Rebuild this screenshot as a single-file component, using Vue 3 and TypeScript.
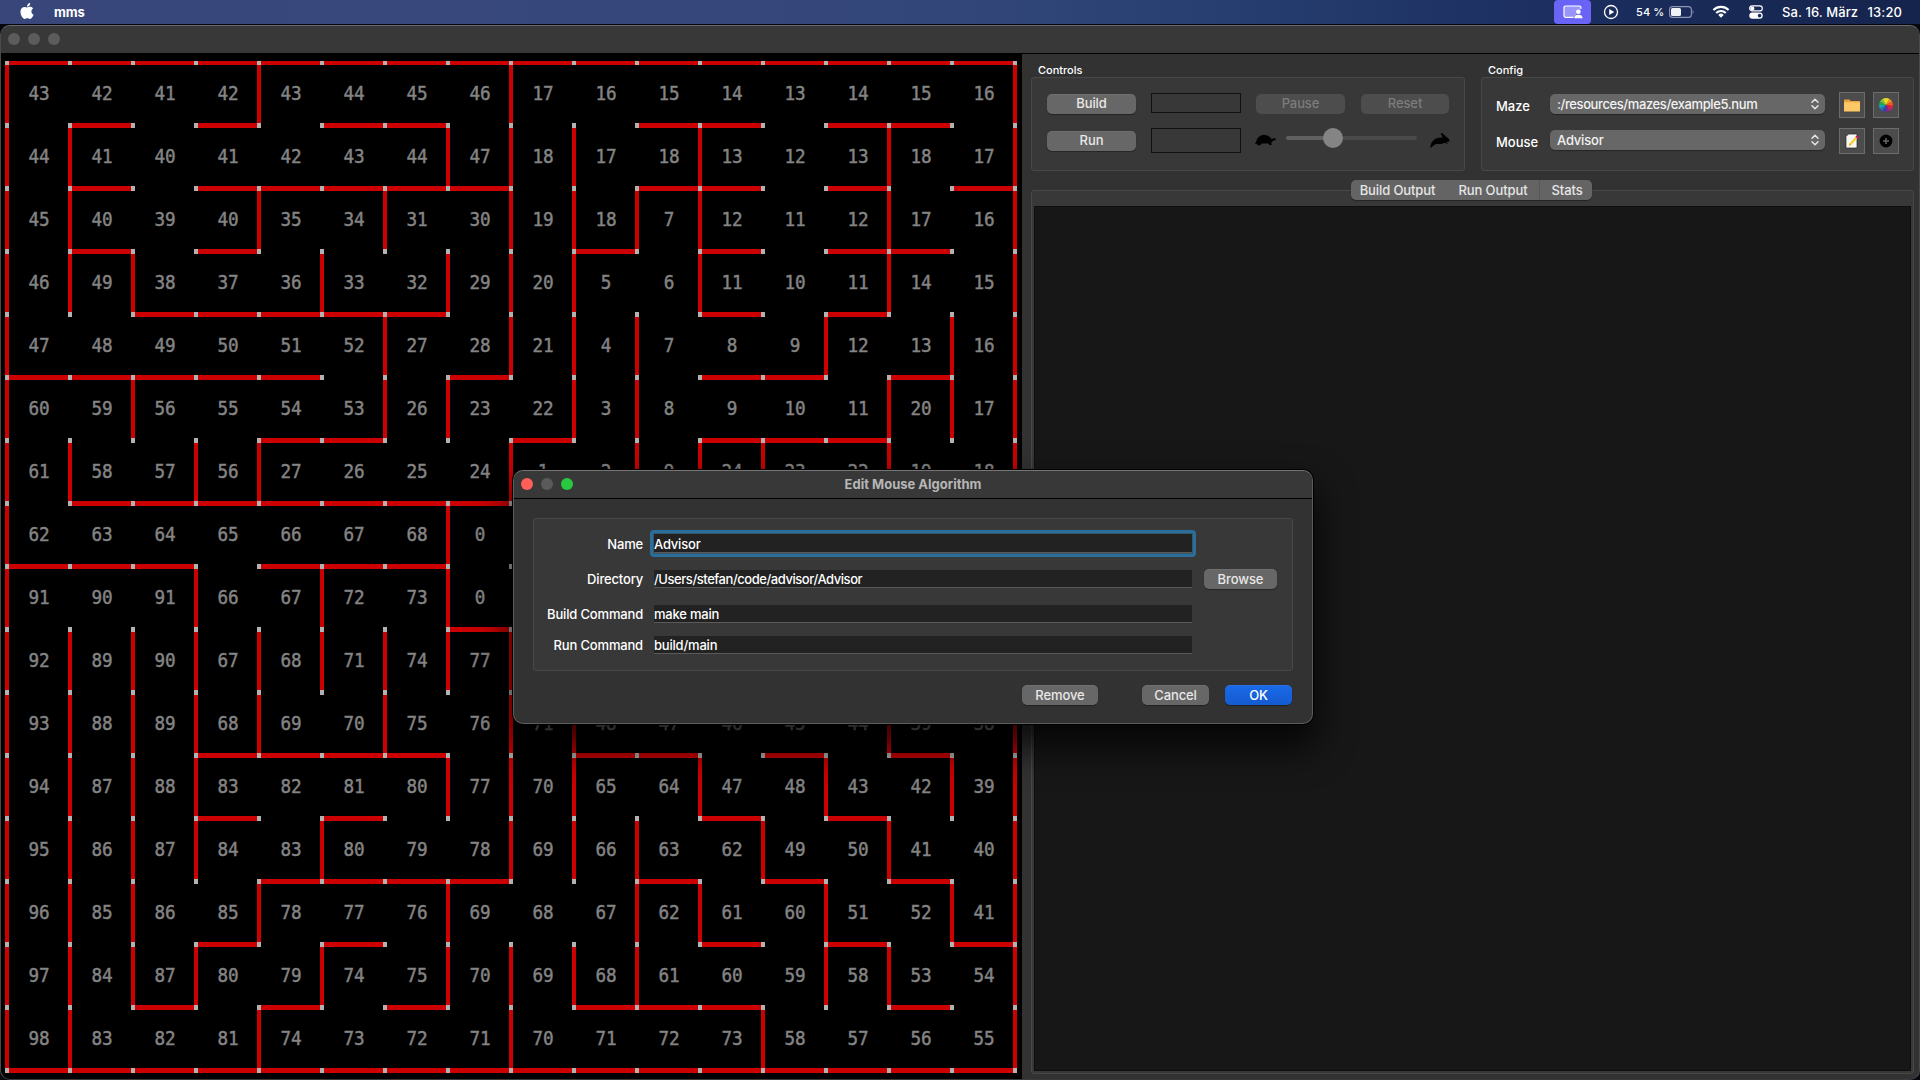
<script setup lang="ts">
interface Rect { x: number; y: number; w: number; h: number }
interface Label { x: number; y: number; t: string }

const PITCH = 63

/* columns that carry a wall on each horizontal grid line */
const horizontal: number[][] = [
  [0, 1, 2, 3, 4, 5, 6, 7, 8, 9, 10, 11, 12, 13, 14, 15],
  [1, 3, 5, 6, 10, 11, 13, 14],
  [1, 3, 4, 5, 6, 7, 10, 11, 13, 15],
  [1, 3, 9, 11, 13, 14],
  [2, 3, 4, 5, 6, 11, 13],
  [0, 1, 2, 3, 4, 7, 11, 12, 14],
  [4, 5, 8, 11, 12, 13],
  [1, 2, 3, 4, 5, 6, 7],
  [0, 1, 2, 4, 5, 6],
  [7],
  [],
  [3, 4, 5, 6, 9, 10, 12, 14],
  [3, 5, 11, 13],
  [4, 5, 6, 7, 10, 12, 14],
  [3, 5, 11, 13, 15],
  [2, 4, 6, 9, 10, 11, 14],
  [0, 1, 2, 3, 4, 5, 6, 7, 8, 9, 10, 11, 12, 13, 14, 15],
]

/* vertical grid lines that carry a wall in each row */
const vertical: number[][] = [
  [0, 4, 8, 16],
  [0, 1, 7, 8, 9, 11, 14, 16],
  [0, 1, 4, 6, 8, 9, 10, 11, 14, 16],
  [0, 1, 2, 5, 7, 8, 9, 11, 14, 16],
  [0, 6, 8, 9, 10, 13, 15, 16],
  [0, 2, 6, 7, 9, 10, 14, 15, 16],
  [0, 1, 3, 4, 8, 10, 11, 12, 14, 16],
  [0, 7, 16],
  [0, 3, 5, 7, 16],
  [0, 1, 2, 3, 4, 5, 6, 7, 8, 16],
  [0, 1, 2, 3, 4, 6, 8, 9, 14, 16],
  [0, 1, 2, 3, 7, 8, 9, 11, 13, 15, 16],
  [0, 1, 2, 3, 5, 8, 9, 10, 12, 14, 16],
  [0, 1, 2, 4, 7, 10, 11, 13, 15, 16],
  [0, 1, 2, 3, 5, 7, 8, 9, 10, 13, 14, 16],
  [0, 1, 4, 8, 12, 16],
]

const distances: string[] = [
  '43 42 41 42 43 44 45 46 17 16 15 14 13 14 15 16',
  '44 41 40 41 42 43 44 47 18 17 18 13 12 13 18 17',
  '45 40 39 40 35 34 31 30 19 18 7 12 11 12 17 16',
  '46 49 38 37 36 33 32 29 20 5 6 11 10 11 14 15',
  '47 48 49 50 51 52 27 28 21 4 7 8 9 12 13 16',
  '60 59 56 55 54 53 26 23 22 3 8 9 10 11 20 17',
  '61 58 57 56 27 26 25 24 1 2 9 24 23 22 19 18',
  '62 63 64 65 66 67 68 0',
  '91 90 91 66 67 72 73 0',
  '92 89 90 67 68 71 74 77',
  '93 88 89 68 69 70 75 76 71 48 47 46 45 44 39 38',
  '94 87 88 83 82 81 80 77 70 65 64 47 48 43 42 39',
  '95 86 87 84 83 80 79 78 69 66 63 62 49 50 41 40',
  '96 85 86 85 78 77 76 69 68 67 62 61 60 51 52 41',
  '97 84 87 80 79 74 75 70 69 68 61 60 59 58 53 54',
  '98 83 82 81 74 73 72 71 70 71 72 73 58 57 56 55',
]

const lineY = (k: number) => (k === 0 ? 7 : 6 + k * PITCH)
const lineH = (k: number) => (k === 0 ? 4 : 5)
const lineX = (i: number) => 4 + i * PITCH

const walls: Rect[] = [
  ...horizontal.flatMap((cols, k) => cols.map((c) => ({ x: lineX(c), y: lineY(k), w: PITCH + 4, h: lineH(k) }))),
  ...vertical.flatMap((lines, r) => lines.map((i) => ({ x: lineX(i), y: lineY(r), w: 4, h: PITCH + 4 }))),
]

const posts: Rect[] = []
for (let k = 0; k <= 16; k++)
  for (let i = 0; i <= 16; i++) posts.push({ x: lineX(i), y: lineY(k), w: 4, h: lineH(k) })

const labels: Label[] = distances.flatMap((row, r) =>
  row.split(' ').map((t, c) => ({ x: 38 + c * PITCH, y: 46 + r * PITCH, t })),
)

const wheel = ['#f9d423', '#f7941d', '#f15a29', '#e8252c', '#c2226e', '#7b2a8b', '#3b3fa0', '#1c75bc', '#16a3b8', '#1fa750', '#7ac143', '#d7df23']
const slice = (n: number) => {
  const a = ((n * 30 - 90) * Math.PI) / 180
  const b = (((n + 1) * 30 - 90) * Math.PI) / 180
  const p = (v: number) => (7 + 7 * v).toFixed(2)
  return `M7 7L${p(Math.cos(a))} ${p(Math.sin(a))}A7 7 0 0 1 ${p(Math.cos(b))} ${p(Math.sin(b))}Z`
}
</script>

<template>
  <div class="screen">
    <header class="menubar">
      <svg class="apple" viewBox="0 0 24 24" width="16" height="16"><path fill="#fff" d="M12.152 6.896c-.948 0-2.415-1.078-3.96-1.04-2.04.027-3.91 1.183-4.961 3.014-2.117 3.675-.546 9.103 1.519 12.09 1.013 1.454 2.208 3.09 3.792 3.039 1.52-.065 2.09-.987 3.935-.987 1.831 0 2.35.987 3.96.948 1.637-.026 2.676-1.48 3.676-2.948 1.156-1.688 1.636-3.325 1.662-3.415-.039-.013-3.182-1.221-3.22-4.857-.026-3.04 2.48-4.494 2.597-4.559-1.429-2.09-3.623-2.324-4.39-2.376-2-.156-3.675 1.09-4.61 1.09zM15.53 3.83c.843-1.012 1.4-2.427 1.245-3.83-1.207.052-2.662.805-3.532 1.818-.78.896-1.454 2.338-1.273 3.714 1.338.104 2.715-.688 3.559-1.701" /></svg>
      <span class="app-name">mms</span>
      <div class="tray">
        <span class="share">
          <svg viewBox="0 0 20 14" width="20" height="14">
            <path d="M10.500 12.400H2.600A1.600 1.600 0 0 1 1 10.800V2.600A1.600 1.600 0 0 1 2.600 1h13.800A1.600 1.600 0 0 1 18 2.600V3.800" fill="#9a95f8" stroke="#fff" stroke-width="1.200" />
            <circle cx="15.400" cy="6.700" r="2.300" fill="#fff" />
            <path d="M11.200 13.200c0-2.400 1.700-3.500 4.200-3.500s4.200 1.100 4.200 3.500z" fill="#fff" />
          </svg>
        </span>
        <svg class="play" viewBox="0 0 16 16" width="16" height="16"><circle cx="8" cy="8" r="6.500" fill="none" stroke="#fff" stroke-width="1.300" /><path d="M6.200 4.900v6.200L11.200 8z" fill="#fff" /></svg>
        <span class="percent">54 %</span>
        <svg class="battery" viewBox="0 0 26 12" width="26" height="12"><rect x=".6" y=".6" width="21.800" height="10.800" rx="3" fill="none" stroke="#8d96b2" stroke-width="1.100" /><rect x="2" y="2" width="10" height="8" rx="1.500" fill="#f2f3f6" /><path d="M23.600 4v4c1.200-.5 1.200-3.500 0-4z" fill="#8d96b2" /></svg>
        <svg class="wifi" viewBox="0 0 18 13" width="18" height="13"><g fill="none" stroke="#fff" stroke-width="2.100"><path d="M1.400 5a10.800 10.800 0 0 1 15.200 0" /><path d="M4.200 8a6.800 6.800 0 0 1 9.600 0" /></g><path d="M9 12.700L6.300 9.900a3.900 3.900 0 0 1 5.400 0z" fill="#fff" /></svg>
        <svg class="center" viewBox="0 0 14 14" width="14" height="14"><rect x=".7" y=".9" width="12.600" height="5" rx="2.500" fill="none" stroke="#fff" stroke-width="1.200" /><circle cx="3.400" cy="3.400" r="2" fill="#fff" /><rect x=".3" y="7.600" width="13.400" height="6.100" rx="3" fill="#fff" /><circle cx="10.600" cy="10.650" r="1.800" fill="#1c2b5c" /></svg>
        <span class="clock"><span>Sa. 16. März</span><span>13:20</span></span>
      </div>
    </header>

    <main class="window">
      <div class="titlebar"><i /><i /><i /></div>
      <div class="body">
        <section class="maze">
          <svg width="1021" height="1025" viewBox="0 0 1021 1025" shape-rendering="crispEdges">
            <rect v-for="(w, n) in walls" :key="'w' + n" :x="w.x" :y="w.y" :width="w.w" :height="w.h" fill="#cc0000" />
            <rect v-for="(p, n) in posts" :key="'p' + n" :x="p.x" :y="p.y" :width="p.w" :height="p.h" fill="#b2b2b2" />
            <text v-for="(l, n) in labels" :key="'l' + n" :transform="`translate(${l.x} ${l.y}) scale(.93 1)`" class="dist">{{ l.t }}</text>
          </svg>
        </section>

        <section class="side">
          <div class="groups">
            <div class="group controls">
              <h3>Controls</h3>
              <div class="box">
                <div class="ctl-row first">
                  <button class="btn">Build</button>
                  <span class="status" />
                  <button class="btn off">Pause</button>
                  <button class="btn off last">Reset</button>
                </div>
                <div class="ctl-row second">
                  <button class="btn">Run</button>
                  <span class="status tall" />
                  <svg class="turtle" viewBox="0 0 21 12" width="21" height="12"><path d="M0 10C.2 9 1 8.400 1.300 7.600 2 3.500 5 1 8.800 1c4 0 6.600 1.700 7.800 4.200 1-.9 2.300-1.300 3.500-.9.900.4.900 1.500 0 1.900-1 .4-1.900.3-2.400.9-.5.700-.6 1.300-1.700 1.500.4.800.8 1.700.7 2.500h-2.200L13.300 9.600H6.600l-1 1.500c-1.200.3-2.600.3-3.600 0 .1-.5.300-.9.500-1.300z" fill="#000" /></svg>
                  <span class="slider"><i /></span>
                  <svg class="hare" viewBox="0 0 20 17" width="20" height="17"><path d="M.8 16.300C0 13.500 1 10.400 3.500 8.200 5.800 6 9 5.200 12.600 5.600L11 1.900C10.800.8 11.800.6 12.500 1.300L16.400 5l1.900 1.300c.9.800 1.100 1.900 1.300 2.900-1.100.6-2.300.6-3.500.8.600.7 1.900.7 2.300 1.300-1.200.6-2.800.2-4.300-.5-1.200 1.100-3.900 1.500-6.900 1C4.600 12 3.100 13.900.8 16.300z" fill="#000" /></svg>
                </div>
              </div>
            </div>
            <div class="group config">
              <h3>Config</h3>
              <div class="box">
                <div class="cfg-row">
                  <label>Maze</label>
                  <span class="select"><b class="path">:/resources/mazes/example5.num</b><svg viewBox="0 0 8 12" width="8" height="12"><path d="M1 4.300L4 1.200l3 3.100M1 7.700l3 3.100 3-3.100" fill="none" stroke="#e4e4e4" stroke-width="1.500" stroke-linecap="round" stroke-linejoin="round" /></svg></span>
                  <span class="tool"><svg viewBox="0 0 16 13" width="16" height="13"><path d="M0 1.200Q0 .5.700.5h4.600l1.400 1.500H15.300q.7 0 .7.700V6H0z" fill="#e8a33d" /><rect y="3.300" width="16" height="9.200" rx=".6" fill="#ffc866" /></svg></span>
                  <span class="tool"><svg viewBox="0 0 14 14" width="14" height="14"><path v-for="(c, n) in wheel" :key="c" :d="slice(n)" :fill="c" /></svg></span>
                </div>
                <div class="cfg-row">
                  <label>Mouse</label>
                  <span class="select"><b>Advisor</b><svg viewBox="0 0 8 12" width="8" height="12"><path d="M1 4.300L4 1.200l3 3.100M1 7.700l3 3.100 3-3.100" fill="none" stroke="#e4e4e4" stroke-width="1.500" stroke-linecap="round" stroke-linejoin="round" /></svg></span>
                  <span class="tool"><svg viewBox="0 0 14 16" width="14" height="16"><path d="M1 3.500L3.500 1H12v14H1z" fill="#f7f7f2" stroke="#222" stroke-width=".7" /><path d="M3.800 12.800l.9-2.600 5.800-6.400 1.800 1.500-5.900 6.500z" fill="#f6d32d" /><path d="M10.300 4l1.100-1.200q.6-.4 1.100 0l.7.600q.5.500.1 1.100l-1.100 1.100z" fill="#d6147c" /><path d="M3.800 12.800l.9-2.600 1.700 1.600z" fill="#e8a33d" /></svg></span>
                  <span class="tool"><svg viewBox="0 0 14 14" width="14" height="14"><circle cx="7" cy="7" r="6.400" fill="#000" /><path d="M7 4v6M4 7h6" stroke="#666" stroke-width="1.500" /></svg></span>
                </div>
              </div>
            </div>
          </div>

          <div class="tabs"><span class="t1">Build Output</span><span class="t2">Run Output</span><span class="t3">Stats</span></div>
          <div class="pane"><div class="output" /></div>
        </section>
      </div>
    </main>

    <div class="dialog">
      <div class="dlg-title"><div class="lights"><i class="red" /><i /><i class="green" /></div><strong>Edit Mouse Algorithm</strong></div>
      <div class="form">
        <div class="line name"><label>Name</label><span class="ring"><span class="field">Advisor</span></span></div>
        <div class="line dir"><label>Directory</label><span class="field path">/Users/stefan/code/advisor/Advisor</span><button class="btn browse">Browse</button></div>
        <div class="line cmd"><label>Build Command</label><span class="field">make main</span></div>
        <div class="line run"><label>Run Command</label><span class="field">build/main</span></div>
      </div>
      <div class="actions">
        <button class="btn remove">Remove</button>
        <button class="btn cancel">Cancel</button>
        <button class="btn ok">OK</button>
      </div>
    </div>
  </div>
</template>

<style>
body { margin: 0; background: #000; overflow: hidden; }
</style>

<style scoped>
* { box-sizing: border-box; }
.screen { position: relative; width: 1920px; height: 1080px; overflow: hidden; background: #05070f; font: 500 13px/16px Inter, "Liberation Sans", sans-serif; color: #fff; letter-spacing: -.2px; }
.menubar { display: flex; align-items: center; height: 24px; background: linear-gradient(90deg, #38467a 0%, #38487c 20%, #33467a 50%, #263f70 64%, #1c2f60 80%, #15244c 100%); }
.apple { margin: -2px 0 0 19px; }
.app-name { margin-left: 19px; font-weight: 700; letter-spacing: -.1px; }
.tray { display: flex; align-items: center; margin-left: auto; height: 24px; padding-right: 18px; }
.share { display: flex; align-items: center; justify-content: center; width: 37px; height: 24px; border-radius: 4px; background: #6a64f6; }
.play { margin: -1px 0 0 12px; }
.percent { width: 28px; margin-left: 17px; font-size: 11px; letter-spacing: .1px; white-space: nowrap; }
.battery { margin-left: 5px; }
.wifi { margin: -1px 0 0 17px; }
.center { margin: 0 0 0 19px; }
.clock { display: flex; justify-content: space-between; width: 120px; margin-left: 19px; letter-spacing: .1px; white-space: nowrap; }

.window { display: flex; flex-direction: column; height: 1055px; margin-top: 1px; border: 1px solid #4a4a4a; border-top-color: #6a6a6a; border-bottom-color: #3a3a3a; border-radius: 10px; overflow: hidden; background: #323232; }
.titlebar { display: flex; align-items: center; gap: 8px; flex: none; height: 27px; padding: 0 0 1px 7px; background: #383838; }
.titlebar i { width: 12px; height: 12px; border-radius: 50%; background: #5c5c5c; }
.body { display: flex; flex: 1; min-height: 0; border-top: 1px solid #000; }
.maze { flex: none; width: 1021px; background: #000; }
.maze svg { display: block; }
.dist { font: 400 19px "DejaVu Sans Mono", monospace; fill: #848484; stroke: #848484; stroke-width: .45px; text-anchor: middle; letter-spacing: 0; }

.side { display: flex; flex-direction: column; flex: 1; padding: 7px 5px 5px 9px; }
.groups { display: flex; justify-content: space-between; }
.group { display: flex; flex-direction: column; }
.controls { width: 434px; }
.config { width: 433px; }
h3 { margin: 0; padding-left: 7px; height: 16px; font: 500 11px/18px Inter, sans-serif; letter-spacing: 0; }
.box { height: 94px; border: 1px solid #484848; border-radius: 3px; background: #383838; }
.btn { flex: none; width: 89px; height: 20px; padding: 0; border: 0; border-radius: 5px; background: #676767; box-shadow: 0 1px 1px rgba(0, 0, 0, .35), inset 0 1px 0 rgba(255, 255, 255, .06); color: #e8e8e8; font: inherit; line-height: 18px; letter-spacing: -.1px; }
.btn.off { background: #4d4d4d; color: #7c7c7c; box-shadow: none; }
.controls .box { padding: 15px 0 0 15px; }
.ctl-row { display: flex; align-items: flex-start; }
.ctl-row .btn { padding-bottom: 2px; }
.first .btn { margin-top: 1px; }
.first .off { margin-left: 15px; }
.first .last { width: 88px; margin-left: 16px; }
.status { width: 90px; height: 20px; margin-left: 15px; border: 1px solid #111; }
.tall { height: 25px; }
.second { margin-top: 14px; }
.second .btn { margin-top: 3px; }
.turtle { margin: 6px 0 0 14px; }
.slider { position: relative; width: 131px; height: 4px; margin: 8px 0 0 10px; border-radius: 2px; background: linear-gradient(90deg, #606060 36%, #4a4a4a 36%); }
.slider i { position: absolute; left: 37px; top: -8px; width: 20px; height: 20px; border-radius: 50%; background: #848484; }
.hare { margin: 4px 0 0 13px; }
.config .box { display: flex; flex-direction: column; gap: 10px; padding: 14px 0 0 14px; }
.cfg-row { display: flex; align-items: center; height: 26px; }
.cfg-row label { width: 54px; padding-top: 1px; letter-spacing: 0; }
.select { display: flex; align-items: center; justify-content: space-between; width: 275px; height: 20px; margin-bottom: 2px; padding: 0 6px 0 7px; border-radius: 5px; background: #676767; box-shadow: 0 1px 1px rgba(0, 0, 0, .35); }
.select b { font-weight: 500; color: #f2f2f2; }
.select .path { letter-spacing: -.4px; }
.tool { display: flex; align-items: center; justify-content: center; width: 26px; height: 26px; margin-left: 8px; border: 1px solid #6c6c6c; background: #4c4c4c; }
.select + .tool { margin-left: 14px; }
.tabs { position: relative; display: flex; z-index: 1; width: 241px; height: 20px; margin: 9px auto -10px; left: -1px; border-radius: 5px; background: #646464; box-shadow: 0 1px 1px rgba(0, 0, 0, .35); line-height: 20px; color: #e6e6e6; text-align: center; letter-spacing: -.1px; white-space: nowrap; }
.t1 { width: 93px; }
.t2 { width: 96px; padding-left: 3px; border-right: 1px solid #575757; }
.t3 { flex: 1; padding-left: 2px; }
.pane { display: flex; flex: 1; padding: 15px 2px 2px; border: 1px solid #484848; border-radius: 3px; background: #383838; }
.output { flex: 1; border: 1px solid #0e0e0e; background: #171717; }

.dialog { position: absolute; left: 513px; top: 470px; width: 800px; height: 254px; border: 1px solid #5c5c5c; border-top-color: #757575; border-radius: 10px; background: #323232; box-shadow: 0 0 0 1px #000, 0 20px 36px 4px rgba(0, 0, 0, .75); }
.dlg-title { display: flex; align-items: center; height: 28px; padding-bottom: 2px; border-bottom: 1px solid #000; border-radius: 9px 9px 0 0; background: #383838; }
.lights { display: flex; gap: 8px; width: 300px; padding-left: 7px; }
.lights i { width: 12px; height: 12px; border-radius: 50%; background: #5a5a5a; }
.lights .red { background: #ff5f57; }
.lights .green { background: #28c840; }
.dlg-title strong { width: 198px; text-align: center; font-weight: 700; color: #b6b6b6; letter-spacing: 0; line-height: 16px; white-space: nowrap; }
.form { width: 760px; height: 153px; margin: 19px 0 0 19px; padding-top: 11px; border: 1px solid #484848; border-radius: 3px; background: #383838; }
.line { display: flex; align-items: center; }
.line label { width: 109px; margin-right: 11px; text-align: right; white-space: nowrap; letter-spacing: -.17px; }
.field { display: block; width: 538px; height: 18px; background: #222; border-bottom: 1px solid #5a5a5a; line-height: 19px; white-space: nowrap; }
.field.path { letter-spacing: -.45px; }
.ring { width: 546px; height: 27px; margin-left: -4px; padding: 4px; border: 0; border-radius: 4px; background: #2a6f9c; }
.ring .field { height: 19px; box-shadow: 0 0 0 1px #3b5567; line-height: 21px; }
.dir { height: 20px; margin-top: 12px; }
.cmd { height: 20px; margin-top: 15px; }
.run { height: 20px; margin-top: 11px; }
.browse { width: 73px; margin-left: 12px; }
.actions { display: flex; justify-content: flex-end; margin: 14px 20px 0 0; }
.remove { width: 76px; margin-right: 44px; }
.cancel { width: 67px; margin-right: 16px; }
.ok { width: 67px; background: linear-gradient(#1a6ae8, #145bd0); color: #fff; }
</style>
